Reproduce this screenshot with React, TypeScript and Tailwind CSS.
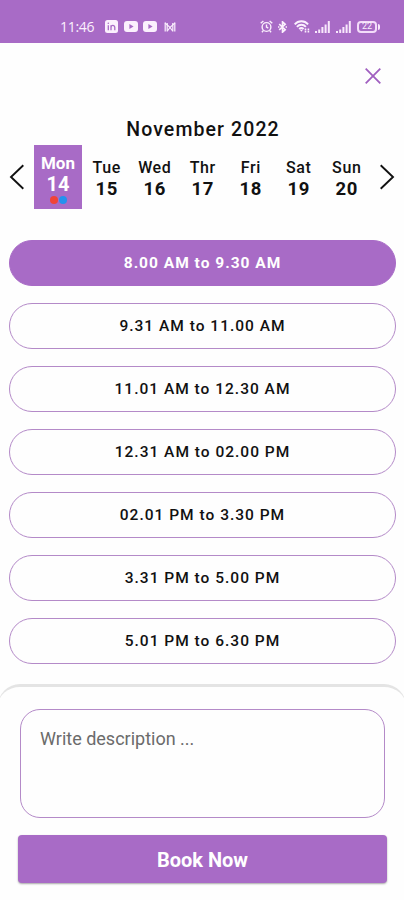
import { useState } from "react";

const DAYS = [
  { name: "Mon", date: 14 },
  { name: "Tue", date: 15 },
  { name: "Wed", date: 16 },
  { name: "Thr", date: 17 },
  { name: "Fri", date: 18 },
  { name: "Sat", date: 19 },
  { name: "Sun", date: 20 },
];

const SLOTS = [
  "8.00 AM to 9.30 AM",
  "9.31 AM to 11.00 AM",
  "11.01 AM to 12.30 AM",
  "12.31 AM to 02.00 PM",
  "02.01 PM to 3.30 PM",
  "3.31 PM to 5.00 PM",
  "5.01 PM to 6.30 PM",
];

const YoutubeIcon = () => (
  <svg className="h-[11px] w-[14px] shrink-0" viewBox="0 0 14 11" aria-hidden>
    <rect width="14" height="11" rx="3" fill="#fbf0fd" />
    <path d="M5.4 3.1v4.8L9.6 5.5z" fill="#a86bc6" />
  </svg>
);

const SignalIcon = () => (
  <svg className="h-3 w-[15px] shrink-0" viewBox="0 0 15 12" fill="#f8e8fc" aria-hidden>
    <rect x="0" y="10" width="2" height="2" />
    <rect x="3.2" y="8.5" width="2" height="3.5" />
    <rect x="6.4" y="6" width="2" height="6" />
    <rect x="9.6" y="3.5" width="2" height="8.5" />
    <rect x="12.8" y="0" width="2" height="12" />
  </svg>
);

const StatusBar = () => (
  <header className="flex h-[43px] shrink-0 items-center bg-[#a86bc6] pt-2.5 pr-6 pl-[60px] text-[#fbf0fd]">
    <span className="w-[45px] font-['Open_Sans',sans-serif] text-[14px] leading-none tracking-[-0.3px]">11:46</span>
    <svg className="h-[13px] w-[13px] shrink-0" viewBox="0 0 13 13" aria-hidden>
      <rect width="13" height="13" rx="2.5" fill="#fbf0fd" />
      <path
        d="M3.3 5.2v5M6 10.2v-5M6 7.5c0-2.6 3.8-2.8 3.8 0v2.7"
        fill="none"
        stroke="#a86bc6"
        strokeWidth="1.3"
      />
      <circle cx="3.3" cy="3.3" r="0.8" fill="#a86bc6" />
    </svg>
    <span className="ml-1.5 flex gap-[5px]">
      <YoutubeIcon />
      <YoutubeIcon />
    </span>
    <svg className="ml-[7px] h-2.5 w-3 shrink-0" viewBox="0 0 12 10" fill="none" stroke="currentColor" aria-hidden>
      <path d="M1.2 9.5v-9M3.2 1v8.5M8.8 1v8.5M10.8 9.5v-9" strokeWidth="1.2" />
      <path d="M1 .9l5 4.6 5-4.6M3.4 9L6 5.5 8.6 9" strokeWidth="1.1" />
    </svg>

    <div className="ml-auto flex items-center">
      <svg className="h-[13px] w-[13px]" viewBox="0 0 13 13" fill="none" stroke="currentColor" strokeWidth="1.4" aria-hidden>
        <circle cx="6.5" cy="7" r="4.4" />
        <path d="M6.5 4.6V7.2l1.8 1M.7 3.3L3.4.9M12.3 3.3L9.6.9M3.3 10.6l-1.4 1.6M9.7 10.6l1.4 1.6" />
      </svg>
      <svg className="ml-[5px] h-3 w-[9px]" viewBox="0 0 9 12" fill="none" stroke="currentColor" strokeWidth="1.6" aria-hidden>
        <path d="M1.2 3.2l6 5.5-2.7 2.5V.8l2.7 2.5-6 5.5" />
        <path d="M0 6h1.4M7.6 6H9" />
      </svg>
      <svg className="ml-[7px] h-[13px] w-[16px]" viewBox="0 0 16 13" fill="none" stroke="currentColor" aria-hidden>
        <path d="M.7 4.4c3.6-4.2 9.8-4.2 13.4 0M2.9 6.8c2.5-2.7 6.5-2.7 9 0M5.2 9c1.4-1.4 3-1.4 4.4 0" strokeWidth="1.9" />
        <path d="M5.8 9.8l1.6 2 1.6-2z" fill="currentColor" stroke="none" />
        <path d="M11.5 8.6v3.8M14.4 8.6v3.8" strokeWidth="1.6" strokeDasharray="1.6 .6" />
      </svg>
      <div className="ml-[5px] flex gap-1.5">
        <SignalIcon />
        <SignalIcon />
      </div>
      <div className="ml-1.5 flex items-center gap-px">
        <span className="flex h-3 w-5 items-center justify-center rounded-[4px] border-2 border-[#f3dcf9] font-['Roboto',sans-serif] text-[9px] leading-none">
          22
        </span>
        <span className="h-1.5 w-[2px] rounded-r-sm bg-[#f8e8fc]" />
      </div>
    </div>
  </header>
);

const Arrow = ({ flip = false }: { flip?: boolean }) => (
  <svg
    className={`h-[26px] w-4 ${flip ? "rotate-180" : ""}`}
    viewBox="0 0 16 26"
    fill="none"
    stroke="#111"
    strokeWidth="1.9"
    aria-hidden
  >
    <path d="M14.3 1.2L2 13l12.3 11.8" />
  </svg>
);

const App = () => {
  const [day, setDay] = useState(14);
  const [slot, setSlot] = useState(0);

  return (
    <div className="flex h-[900px] w-full flex-col overflow-hidden bg-[#fefefe] font-['Roboto',sans-serif] text-[#111]">
      <StatusBar />

      <div className="flex h-16 shrink-0 items-center justify-end pt-px pr-[23px]">
        <button aria-label="Close">
          <svg className="h-4 w-4" viewBox="0 0 16 16" fill="none" stroke="#a05fc0" strokeWidth="1.8">
            <path d="M.7.7l14.6 14.6M15.3.7L.7 15.3" />
          </svg>
        </button>
      </div>

      <h1 className="mt-[11px] pl-0.5 text-center text-[19.5px] leading-6 font-medium tracking-[1.1px]">November 2022</h1>

      {/* week strip */}
      <div className="mt-[3px] flex h-16 shrink-0 items-center justify-between px-[9px]">
        <button aria-label="Previous week">
          <Arrow />
        </button>
        <div className="flex h-full w-[336px]">
          {DAYS.map(({ name, date }) => {
            const selected = date === day;

            return (
              <button
                key={date}
                onClick={() => setDay(date)}
                className={`flex w-12 flex-col items-center ${selected ? "bg-[#a86bc6] pt-2 font-bold text-white" : "pt-[13px] pl-[1.5px]"}`}
              >
                <span className={selected ? "text-[17px] leading-5" : "text-[16px] leading-5 font-medium tracking-[0.6px]"}>
                  {name}
                </span>
                <span className={`font-bold ${selected ? "text-[20px] leading-[23px]" : "text-[18.5px] leading-[22px] tracking-[0.6px]"}`}>
                  {date}
                </span>
                {selected && (
                  <span className="flex gap-px">
                    <span className="h-2 w-2 rounded-full bg-[#f04438]" />
                    <span className="h-2 w-2 rounded-full bg-[#2491ee]" />
                  </span>
                )}
              </button>
            );
          })}
        </div>
        <button aria-label="Next week">
          <Arrow flip />
        </button>
      </div>

      {/* time slots */}
      <div className="mt-[31px] flex flex-col gap-[17.5px] pr-2 pl-[9px]">
        {SLOTS.map((label, idx) => (
          <button
            key={label}
            onClick={() => setSlot(idx)}
            className={`h-[45.5px] rounded-full border pt-0.5 text-[15.5px] leading-none tracking-[1px] ${
              idx === slot
                ? "border-[#a86bc6] bg-[#a86bc6] font-bold text-white"
                : "border-[#b48ac8] font-medium"
            }`}
          >
            {label}
          </button>
        ))}
      </div>

      {/* bottom sheet */}
      <div className="-mx-0.5 mt-[20.5px] flex flex-1 flex-col rounded-t-[22px] border-t-[3px] border-[#e4e4e4] bg-[#fefefe] pt-[22px] pr-[19px] pl-5">
        <textarea
          placeholder="Write description ..."
          className="mx-0.5 h-[109px] shrink-0 resize-none rounded-[20px] border border-[#b48ac8] px-[19px] pt-[17px] text-[18px] leading-6 outline-none placeholder:text-[#6b6b6b]"
        />
        <button className="mt-[17px] h-12 shrink-0 rounded-[4px] bg-[#a86bc6] pt-0.5 text-[20px] font-bold text-white shadow-[0_1px_2px_rgba(0,0,0,0.35)]">
          Book Now
        </button>
      </div>
    </div>
  );
};

export default App;
